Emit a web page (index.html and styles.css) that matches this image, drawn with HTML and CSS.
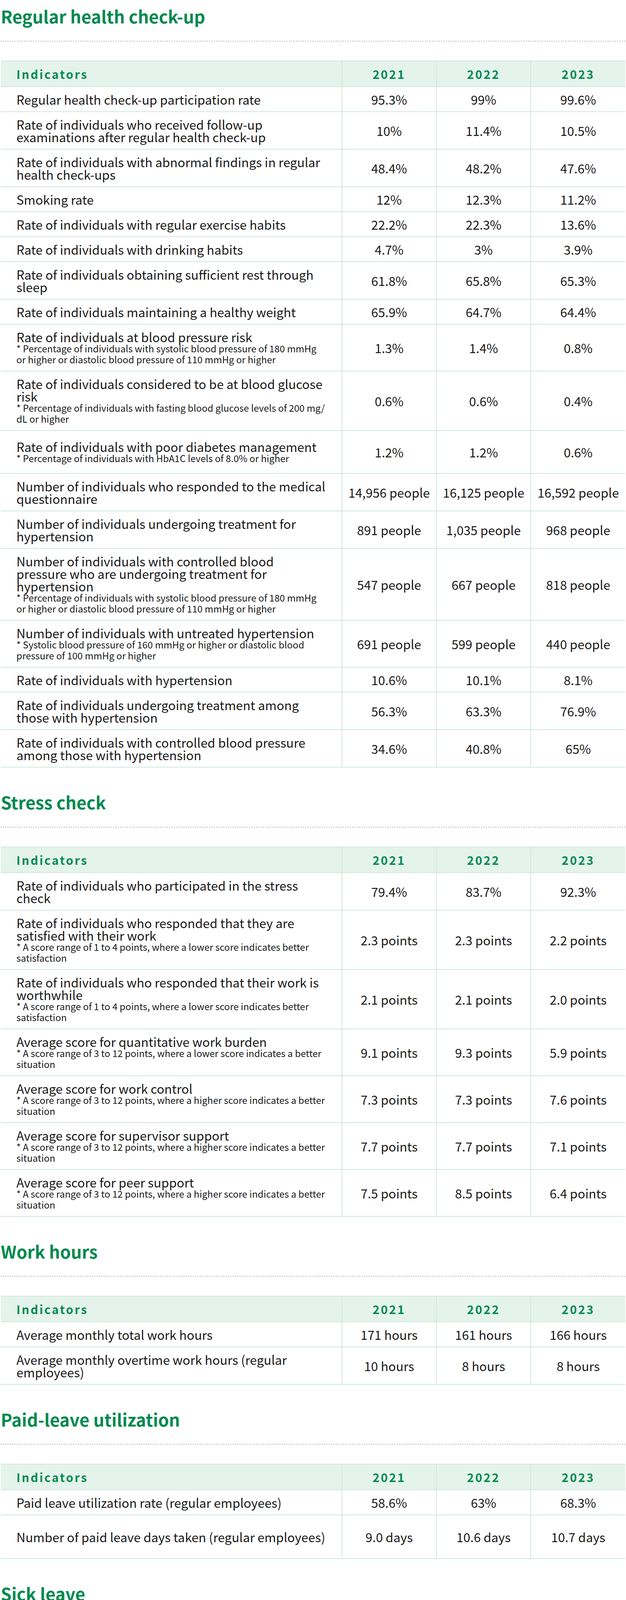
FILE: index.html
```html
<!DOCTYPE html>
<html lang="en">
<head>
<meta charset="utf-8">
<title>Health indicators</title>
<link rel="stylesheet" href="styles.css">
</head>
<body>
<main class="page">

<section class="section">
  <h2 class="section-title">Regular health check-up</h2>
  <table class="data-table">
    <colgroup><col class="col-ind"><col><col><col></colgroup>
    <thead><tr><th class="th-ind">Indicators</th><th>2021</th><th>2022</th><th>2023</th></tr></thead>
    <tbody>
      <tr><td class="ind"><span class="main">Regular health check-up participation rate</span></td><td>95.3%</td><td>99%</td><td>99.6%</td></tr>
      <tr><td class="ind"><span class="main">Rate of individuals who received follow-up examinations after regular health check-up</span></td><td>10%</td><td>11.4%</td><td>10.5%</td></tr>
      <tr><td class="ind"><span class="main">Rate of individuals with abnormal findings in regular health check-ups</span></td><td>48.4%</td><td>48.2%</td><td>47.6%</td></tr>
      <tr><td class="ind"><span class="main">Smoking rate</span></td><td>12%</td><td>12.3%</td><td>11.2%</td></tr>
      <tr><td class="ind"><span class="main">Rate of individuals with regular exercise habits</span></td><td>22.2%</td><td>22.3%</td><td>13.6%</td></tr>
      <tr><td class="ind"><span class="main">Rate of individuals with drinking habits</span></td><td>4.7%</td><td>3%</td><td>3.9%</td></tr>
      <tr><td class="ind"><span class="main">Rate of individuals obtaining sufficient rest through sleep</span></td><td>61.8%</td><td>65.8%</td><td>65.3%</td></tr>
      <tr><td class="ind"><span class="main">Rate of individuals maintaining a healthy weight</span></td><td>65.9%</td><td>64.7%</td><td>64.4%</td></tr>
      <tr><td class="ind"><span class="main">Rate of individuals at blood pressure risk</span><span class="note">* Percentage of individuals with systolic blood pressure of 180 mmHg or higher or diastolic blood pressure of 110 mmHg or higher</span></td><td>1.3%</td><td>1.4%</td><td>0.8%</td></tr>
      <tr><td class="ind"><span class="main">Rate of individuals considered to be at blood glucose risk</span><span class="note">* Percentage of individuals with fasting blood glucose levels of 200 mg/<wbr>dL or higher</span></td><td>0.6%</td><td>0.6%</td><td>0.4%</td></tr>
      <tr class="row-tall"><td class="ind"><span class="main">Rate of individuals with poor diabetes management</span><span class="note">* Percentage of individuals with HbA1C levels of 8.0% or higher</span></td><td>1.2%</td><td>1.2%</td><td>0.6%</td></tr>
      <tr><td class="ind"><span class="main">Number of individuals who responded to the medical questionnaire</span></td><td>14,956 people</td><td>16,125 people</td><td>16,592 people</td></tr>
      <tr><td class="ind"><span class="main">Number of individuals undergoing treatment for hypertension</span></td><td>891 people</td><td>1,035 people</td><td>968 people</td></tr>
      <tr><td class="ind"><span class="main">Number of individuals with controlled blood pressure who are undergoing treatment for hypertension</span><span class="note">* Percentage of individuals with systolic blood pressure of 180 mmHg or higher or diastolic blood pressure of 110 mmHg or higher</span></td><td>547 people</td><td>667 people</td><td>818 people</td></tr>
      <tr><td class="ind"><span class="main">Number of individuals with untreated hypertension</span><span class="note">* Systolic blood pressure of 160 mmHg or higher or diastolic blood pressure of 100 mmHg or higher</span></td><td>691 people</td><td>599 people</td><td>440 people</td></tr>
      <tr><td class="ind"><span class="main">Rate of individuals with hypertension</span></td><td>10.6%</td><td>10.1%</td><td>8.1%</td></tr>
      <tr><td class="ind"><span class="main">Rate of individuals undergoing treatment among those with hypertension</span></td><td>56.3%</td><td>63.3%</td><td>76.9%</td></tr>
      <tr><td class="ind"><span class="main">Rate of individuals with controlled blood pressure among those with hypertension</span></td><td>34.6%</td><td>40.8%</td><td>65%</td></tr>
    </tbody>
  </table>
</section>

<section class="section">
  <h2 class="section-title">Stress check</h2>
  <table class="data-table">
    <colgroup><col class="col-ind"><col><col><col></colgroup>
    <thead><tr><th class="th-ind">Indicators</th><th>2021</th><th>2022</th><th>2023</th></tr></thead>
    <tbody>
      <tr><td class="ind"><span class="main">Rate of individuals who participated in the stress check</span></td><td>79.4%</td><td>83.7%</td><td>92.3%</td></tr>
      <tr><td class="ind"><span class="main">Rate of individuals who responded that they are satisfied with their work</span><span class="note">* A score range of 1 to 4 points, where a lower score indicates better satisfaction</span></td><td>2.3 points</td><td>2.3 points</td><td>2.2 points</td></tr>
      <tr><td class="ind"><span class="main">Rate of individuals who responded that their work is worthwhile</span><span class="note">* A score range of 1 to 4 points, where a lower score indicates better satisfaction</span></td><td>2.1 points</td><td>2.1 points</td><td>2.0 points</td></tr>
      <tr><td class="ind"><span class="main">Average score for quantitative work burden</span><span class="note">* A score range of 3 to 12 points, where a lower score indicates a better situation</span></td><td>9.1 points</td><td>9.3 points</td><td>5.9 points</td></tr>
      <tr><td class="ind"><span class="main">Average score for work control</span><span class="note">* A score range of 3 to 12 points, where a higher score indicates a better situation</span></td><td>7.3 points</td><td>7.3 points</td><td>7.6 points</td></tr>
      <tr><td class="ind"><span class="main">Average score for supervisor support</span><span class="note">* A score range of 3 to 12 points, where a higher score indicates a better situation</span></td><td>7.7 points</td><td>7.7 points</td><td>7.1 points</td></tr>
      <tr><td class="ind"><span class="main">Average score for peer support</span><span class="note">* A score range of 3 to 12 points, where a higher score indicates a better situation</span></td><td>7.5 points</td><td>8.5 points</td><td>6.4 points</td></tr>
    </tbody>
  </table>
</section>

<section class="section">
  <h2 class="section-title">Work hours</h2>
  <table class="data-table">
    <colgroup><col class="col-ind"><col><col><col></colgroup>
    <thead><tr><th class="th-ind">Indicators</th><th>2021</th><th>2022</th><th>2023</th></tr></thead>
    <tbody>
      <tr><td class="ind"><span class="main">Average monthly total work hours</span></td><td>171 hours</td><td>161 hours</td><td>166 hours</td></tr>
      <tr><td class="ind"><span class="main">Average monthly overtime work hours (regular employees)</span></td><td>10 hours</td><td>8 hours</td><td>8 hours</td></tr>
    </tbody>
  </table>
</section>

<section class="section">
  <h2 class="section-title">Paid-leave utilization</h2>
  <table class="data-table">
    <colgroup><col class="col-ind"><col><col><col></colgroup>
    <thead><tr><th class="th-ind">Indicators</th><th>2021</th><th>2022</th><th>2023</th></tr></thead>
    <tbody>
      <tr><td class="ind"><span class="main">Paid leave utilization rate (regular employees)</span></td><td>58.6%</td><td>63%</td><td>68.3%</td></tr>
      <tr class="row-xtall"><td class="ind"><span class="main">Number of paid leave days taken (regular employees)</span></td><td>9.0 days</td><td>10.6 days</td><td>10.7 days</td></tr>
    </tbody>
  </table>
</section>

<section class="section">
  <h2 class="section-title">Sick leave</h2>
  <table class="data-table">
    <colgroup><col class="col-ind"><col><col><col></colgroup>
    <thead><tr><th class="th-ind">Indicators</th><th>2021</th><th>2022</th><th>2023</th></tr></thead>
    <tbody>
      <tr><td class="ind"><span class="main">Number of individuals on leave due to mental health issues</span></td><td>-</td><td>-</td><td>170 people</td></tr>
      <tr><td class="ind"><span class="main">Number of individuals who returned from leave during the fiscal year</span></td><td>-</td><td>-</td><td>68 people</td></tr>
    </tbody>
  </table>
</section>

<section class="section">
  <h2 class="section-title">Occupational accidents</h2>
  <table class="data-table">
    <colgroup><col class="col-ind"><col><col><col></colgroup>
    <thead><tr><th class="th-ind">Indicators</th><th>2021</th><th>2022</th><th>2023</th></tr></thead>
    <tbody>
      <tr><td class="ind"><span class="main">Number of occupational accidents</span></td><td>282</td><td>235</td><td>267</td></tr>
    </tbody>
  </table>
</section>

<section class="section">
  <h2 class="section-title">Measures related to women's health issues</h2>
  <table class="data-table">
    <colgroup><col class="col-ind"><col><col><col></colgroup>
    <thead><tr><th class="th-ind">Indicators</th><th>2021</th><th>2022</th><th>2023</th></tr></thead>
    <tbody>
      <tr><td class="ind"><span class="main">Number of participants in seminars on women's health issues</span></td><td>100 people</td><td>47 people</td><td>94 people</td></tr>
      <tr><td class="ind"><span class="main">Satisfaction level of participants in seminars on women's health issues</span><span class="note">* Rate of participants who responded that they would like to participate again</span></td><td>-</td><td>-</td><td>71.3%</td></tr>
    </tbody>
  </table>
</section>

<section class="section">
  <h2 class="section-title">Measures for employees to establish an exercise routine</h2>
  <table class="data-table">
    <colgroup><col class="col-ind"><col><col><col></colgroup>
    <thead><tr><th class="th-ind">Indicators</th><th>2021</th><th>2022</th><th>2023</th></tr></thead>
    <tbody>
      <tr><td class="ind"><span class="main">Participation rate in the walking event</span><span class="note">* Percentage of participants among all employees of Sugi Pharmacy</span></td><td>27.4%</td><td>28.1%</td><td>21.4%</td></tr>
    </tbody>
  </table>
</section>

<section class="section">
  <h2 class="section-title">Specific health guidance</h2>
  <table class="data-table">
    <colgroup><col class="col-ind"><col><col><col></colgroup>
    <thead><tr><th class="th-ind">Indicators</th><th>2021</th><th>2022</th><th>2023</th></tr></thead>
    <tbody>
      <tr><td class="ind"><span class="main">Rate of individuals who received specific health screenings</span></td><td>95.3%</td><td>99%</td><td>99.6%</td></tr>
      <tr><td class="ind"><span class="main">Implementation rate of specific health guidance</span></td><td>57.9%</td><td>40.1%</td><td>28.4%</td></tr>
    </tbody>
  </table>
</section>

<section class="section">
  <h2 class="section-title">Work engagement</h2>
  <table class="data-table">
    <colgroup><col class="col-ind"><col><col><col></colgroup>
    <thead><tr><th class="th-ind">Indicators</th><th>2021</th><th>2022</th><th>2023</th></tr></thead>
    <tbody>
      <tr><td class="ind"><span class="main">Average score of work engagement</span>
        <ul class="bullets">
          <li>Measurement method: Measured using the Utrecht Work Engagement Scale (Ultra-short version, 3-item version)</li>
          <li>Average scores for "Vigor," "Dedication," and "Absorption" on a scale of 6 points</li>
        </ul></td><td>3.0 points</td><td>3.1 points</td><td>3.4 points</td></tr>
      <tr><td class="ind"><span class="main">Number of individuals measured</span></td><td>17,705 people</td><td>15,345 people</td><td>31,852 people</td></tr>
      <tr><td class="ind"><span class="main">Response rate</span><span class="note">* Among all employees of Sugi Pharmacy</span></td><td>51.5%</td><td>43.9%</td><td>87.5%</td></tr>
    </tbody>
  </table>
</section>

<section class="section">
  <h2 class="section-title">Presenteeism</h2>
  <table class="data-table">
    <colgroup><col class="col-ind"><col><col><col></colgroup>
    <thead><tr><th class="th-ind">Indicators</th><th>2021</th><th>2022</th><th>2023</th></tr></thead>
    <tbody>
      <tr><td class="ind"><span class="main">Presenteeism</span>
        <ul class="bullets">
          <li>Measurement method: Measured using the SPQ-Tokyo University one-item version</li>
          <li>Respondents evaluate their work performance over the past four weeks on a scale of 1 to 100%, with 100% indicating their performance when not affected by illness or injury.</li>
        </ul></td><td>-</td><td>79.4%</td><td>84.2%</td></tr>
      <tr><td class="ind"><span class="main">Number of individuals measured</span></td><td>-</td><td>692 people</td><td>17,616 people</td></tr>
      <tr><td class="ind"><span class="main">Response rate</span><span class="note">* Among all employees of Sugi Pharmacy</span></td><td>-</td><td>2.0%</td><td>46.7%</td></tr>
    </tbody>
  </table>
</section>

<section class="section">
  <h2 class="section-title">Absenteeism</h2>
  <table class="data-table">
    <colgroup><col class="col-ind"><col><col><col></colgroup>
    <thead><tr><th class="th-ind">Indicators</th><th>2021</th><th>2022</th><th>2023</th></tr></thead>
    <tbody>
      <tr><td class="ind"><span class="main">Absenteeism</span>
        <ul class="bullets">
          <li>Measurement method: Calculated based on the number of days of unplanned absences and leave of absence due to illness or injury</li>
          <li>Average number of days calculated by dividing the total number of days of unplanned absences and leave of absence by the number of employees</li>
        </ul></td><td>-</td><td>1.04 days</td><td>0.82 days</td></tr>
      <tr><td class="ind"><span class="main">Number of individuals measured</span></td><td>-</td><td>34,961 people</td><td>39,582 people</td></tr>
      <tr><td class="ind"><span class="main">Total number of days of unplanned absences and leave of absence due to illness or injury</span></td><td>-</td><td>36,471 days</td><td>32,622 days</td></tr>
    </tbody>
  </table>
</section>

</main>
</body>
</html>
```

FILE: styles.css
```css
html, body {
  margin: 0;
  padding: 0;
  background: #ffffff;
}

body {
  font-family: "Noto Sans CJK JP", "Noto Sans", "Liberation Sans", sans-serif;
  color: #1a1a1a;
}

.page {
  padding: 0 2px;
}

.section {
  padding-top: 15px;
}

.section + .section {
  margin-top: 47px;
}

.section-title {
  margin: 0;
  font-size: 44px;
  line-height: 52px;
  font-weight: 700;
  color: #00894f;
  padding-bottom: 37px;
  border-bottom: 3px dotted #cccccc;
}

.data-table {
  margin-top: 48px;
  width: 100%;
  border-collapse: collapse;
  table-layout: fixed;
}

.col-ind {
  width: 873px;
}

.data-table th,
.data-table td {
  border: 2px solid #d2e6de;
}

.data-table tr > :first-child {
  border-left: none;
}

.data-table tr > :last-child {
  border-right: none;
}

.data-table th {
  background: #e4f3ec;
  color: #00894f;
  font-size: 30px;
  line-height: 30px;
  font-weight: 700;
  letter-spacing: 3.5px;
  padding: 17px 4px;
  text-align: center;
}

.data-table th.th-ind {
  text-align: left;
  padding-left: 40px;
}

.data-table td {
  font-size: 32px;
  line-height: 32px;
  padding: 15px 4px;
  text-align: center;
  vertical-align: middle;
}

.data-table td.ind {
  text-align: left;
  padding: 15px 40px 15px 40px;
}

.row-tall td.ind {
  padding-top: 24px;
  padding-bottom: 24px;
}

.row-xtall td.ind {
  padding-top: 39px;
  padding-bottom: 39px;
}

.main {
  display: block;
}

.note {
  display: block;
  font-size: 24px;
  line-height: 28px;
}

.bullets {
  margin: 0 -6px 0 0;
  padding-left: 37px;
  font-size: 24px;
  line-height: 28px;
}
```
